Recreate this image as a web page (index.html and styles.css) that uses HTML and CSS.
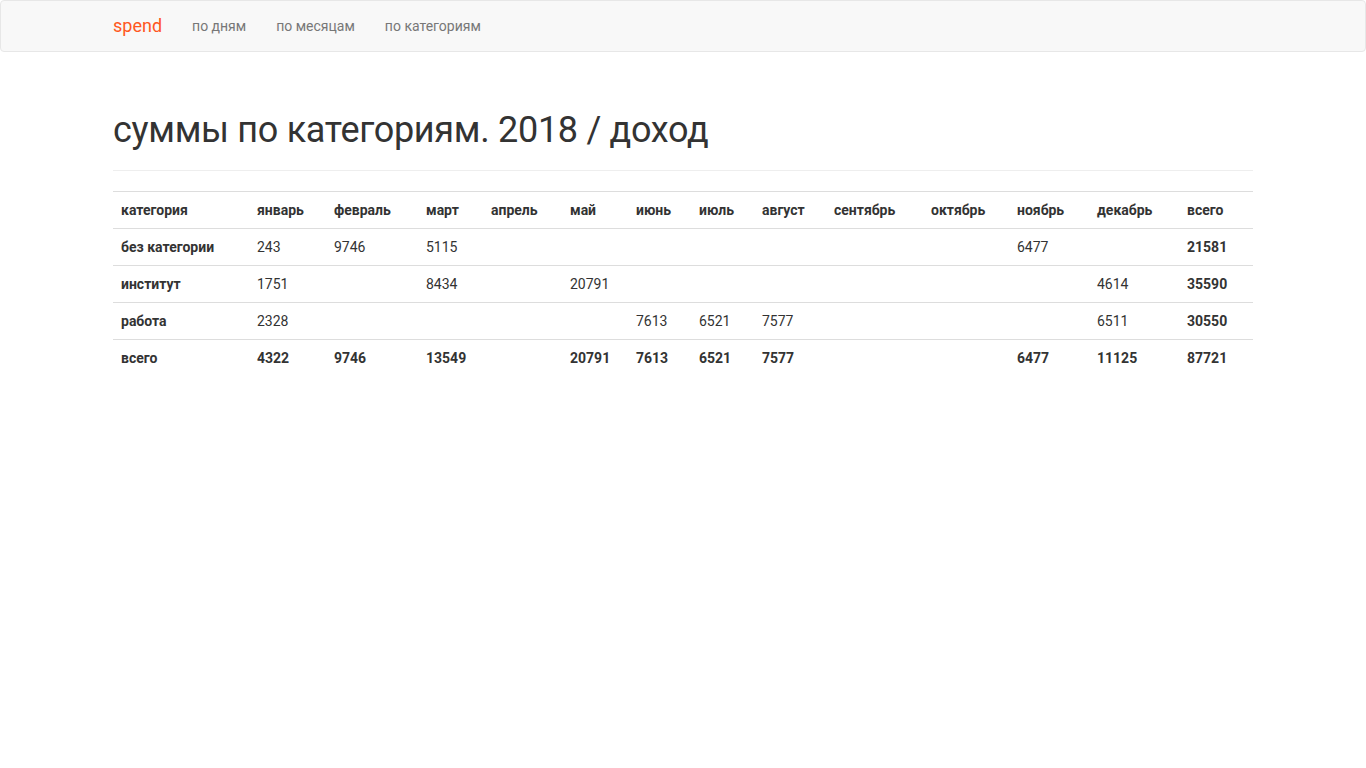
FILE: index.html
```html
<!DOCTYPE html>
<html lang="ru">
<head>
<meta charset="utf-8">
<title>spend</title>
<link rel="stylesheet" href="styles.css">
</head>
<body>
<nav class="navbar">
  <div class="container nav-inner">
    <a class="brand" href="#">spend</a>
    <ul class="nav-links">
      <li><a href="#">по дням</a></li>
      <li><a href="#">по месяцам</a></li>
      <li><a href="#">по категориям</a></li>
    </ul>
  </div>
</nav>
<main class="container content">
  <div class="page-header">
    <h1>суммы по категориям. 2018 / доход</h1>
  </div>
  <table class="sums">
    <colgroup>
      <col><col><col><col><col><col><col><col><col><col><col><col><col><col>
    </colgroup>
    <thead>
      <tr>
        <th>категория</th><th>январь</th><th>февраль</th><th>март</th><th>апрель</th><th>май</th><th>июнь</th><th>июль</th><th>август</th><th>сентябрь</th><th>октябрь</th><th>ноябрь</th><th>декабрь</th><th>всего</th>
      </tr>
    </thead>
    <tbody>
      <tr>
        <td class="name">без категории</td><td>243</td><td>9746</td><td>5115</td><td></td><td></td><td></td><td></td><td></td><td></td><td></td><td>6477</td><td></td><td class="total">21581</td>
      </tr>
      <tr>
        <td class="name">институт</td><td>1751</td><td></td><td>8434</td><td></td><td>20791</td><td></td><td></td><td></td><td></td><td></td><td></td><td>4614</td><td class="total">35590</td>
      </tr>
      <tr>
        <td class="name">работа</td><td>2328</td><td></td><td></td><td></td><td></td><td>7613</td><td>6521</td><td>7577</td><td></td><td></td><td></td><td>6511</td><td class="total">30550</td>
      </tr>
      <tr class="sum-row">
        <td class="name">всего</td><td>4322</td><td>9746</td><td>13549</td><td></td><td>20791</td><td>7613</td><td>6521</td><td>7577</td><td></td><td></td><td>6477</td><td>11125</td><td class="total">87721</td>
      </tr>
    </tbody>
  </table>
</main>
</body>
</html>
```

FILE: styles.css
```css
* { box-sizing: border-box; }
html, body { margin: 0; padding: 0; }
body {
  font-family: Roboto, "Liberation Sans", sans-serif;
  font-size: 14px;
  line-height: 20px;
  color: #333;
  background: #fff;
}
a { text-decoration: none; }

.container {
  width: 1170px;
  margin: 0 auto;
  padding: 0 15px;
}

.navbar {
  height: 52px;
  background: #f8f8f8;
  border: 1px solid #e7e7e7;
  border-radius: 4px;
  margin-bottom: 20px;
}
.nav-inner {
  display: flex;
  align-items: center;
  height: 50px;
}
.brand {
  color: #ff5722;
  font-size: 18px;
  line-height: 20px;
  padding: 15px 15px 15px 0;
}
.nav-links {
  list-style: none;
  margin: 0;
  padding: 0;
  display: flex;
}
.nav-links a {
  display: block;
  color: #777;
  padding: 15px;
  line-height: 20px;
}

.content {
  padding-top: 39px;
}

.page-header {
  margin: 0 0 20px;
  padding-bottom: 9px;
  border-bottom: 1px solid #eee;
}
.page-header h1 {
  margin: 0 0 10px;
  font-size: 36px;
  font-weight: 400;
  line-height: 39.6px;
  color: #333;
  letter-spacing: -0.3px;
}

.sums {
  width: 100%;
  border-collapse: collapse;
  table-layout: fixed;
}
.sums col:nth-child(1) { width: 136px; }
.sums col:nth-child(2) { width: 77px; }
.sums col:nth-child(3) { width: 92px; }
.sums col:nth-child(4) { width: 65px; }
.sums col:nth-child(5) { width: 79px; }
.sums col:nth-child(6) { width: 66px; }
.sums col:nth-child(7) { width: 63px; }
.sums col:nth-child(8) { width: 63px; }
.sums col:nth-child(9) { width: 72px; }
.sums col:nth-child(10) { width: 97px; }
.sums col:nth-child(11) { width: 86px; }
.sums col:nth-child(12) { width: 80px; }
.sums col:nth-child(13) { width: 90px; }
.sums col:nth-child(14) { width: 74px; }

.sums th,
.sums td {
  padding: 8px;
  text-align: left;
  border-top: 1px solid #ddd;
  line-height: 20px;
  white-space: nowrap;
  vertical-align: top;
}
.sums th { font-weight: 700; }
.sums td.name,
.sums td.total,
.sums .sum-row td { font-weight: 700; }
```
